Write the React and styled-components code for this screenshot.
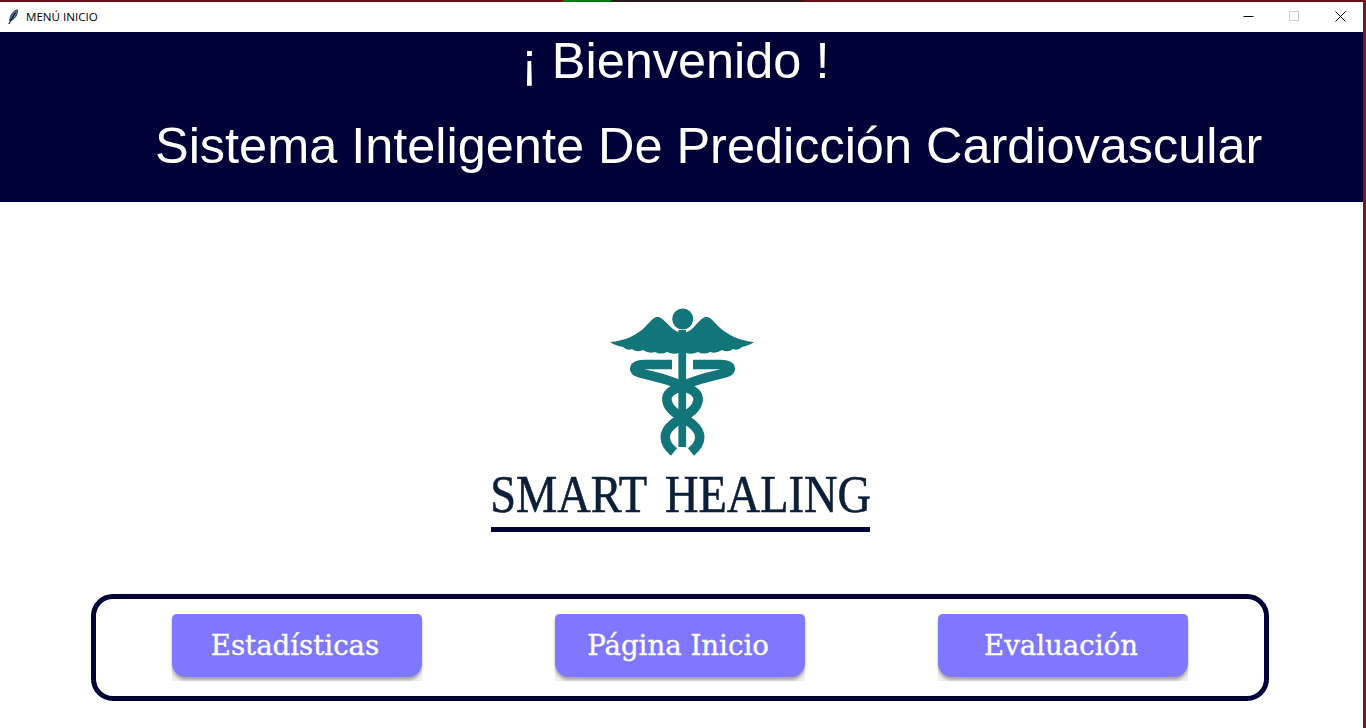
import styled, { createGlobalStyle } from 'styled-components';

const GlobalStyle = createGlobalStyle`
  html, body {
    margin: 0;
    padding: 0;
    background: #ffffff;
    overflow: hidden;
  }
`;

const App = () => {
  return (
    <>
      <GlobalStyle />
      <Frame>
        <TopStrip>
          <StripPart $w="563px" $c="#6a0f16" />
          <StripPart $w="48px" $c="#0c7a12" />
          <StripPart $w="193px" $c="#2a1a1c" />
          <StripPart $w="562px" $c="#6a0f16" />
        </TopStrip>
        <Window>
          <TitleBar>
            <TitleLeft>
              <svg width="12" height="16" viewBox="0 0 12 16">
                <path d="M10.5 0.8C7 1.5 3.8 5 3 9.5L2.6 11.5 4.4 11.2C8 10 10.8 5.5 10.5 0.8Z" fill="#4a7fb5" stroke="#10202f" strokeWidth="0.8" />
                <path d="M8.5 3.5L1.8 15" stroke="#000" strokeWidth="1.1" fill="none" />
              </svg>
              <TitleText>MENÚ INICIO</TitleText>
            </TitleLeft>
            <WinControls>
              <WinButton>
                <svg width="11" height="11" viewBox="0 0 11 11"><path d="M0.5 5.5H10.5" stroke="#000" strokeWidth="1" /></svg>
              </WinButton>
              <WinButton>
                <svg width="11" height="11" viewBox="0 0 11 11"><rect x="0.5" y="0.5" width="9" height="9" fill="none" stroke="#cccccc" strokeWidth="1" /></svg>
              </WinButton>
              <WinButton>
                <svg width="11" height="11" viewBox="0 0 11 11"><path d="M0.5 0.5L10.5 10.5M10.5 0.5L0.5 10.5" stroke="#000" strokeWidth="1" /></svg>
              </WinButton>
            </WinControls>
          </TitleBar>
          <Header>
            <Welcome>¡ Bienvenido !</Welcome>
            <Subtitle>Sistema Inteligente De Predicción Cardiovascular</Subtitle>
          </Header>
          <Main>
            <Logo>
              <svg width="180" height="165" viewBox="0 0 180 165">
                <g fill="#12757a">
                  <circle cx="91.7" cy="19" r="10.5" />
                  <path d="M19 42C34 41 46 35 54 27C59 22 63 16 67 17C71 17 76 24 82 29C85 31 88 33 91.5 33C95 33 98 31 101 29C106 24 111 17 115 17C119 16 123 22 128 27C137 35 149 41 163 42C159 45 155 46 151 47Q147 51 142 49Q137 53 131 50Q125 54 119 52Q113 55 107 52Q101 55 95 53V56H88V53Q82 55 76 52Q70 55 64 52Q58 54 52 50Q46 53 41 49Q36 51 32 47C28 46 23 45 19 42Z" />
                  <rect x="87.4" y="30" width="7.7" height="117" />
                </g>
                <g fill="none" stroke="#12757a" strokeWidth="9.5">
                  <path d="M81 64.5H53C42 64.5 41 71 49 73C60 76 72 78 84 83C98 89 109 91 107 101C105 112 92 116 82 124C72 132 71 142 83 152" />
                  <path d="M102 64.5H130C141 64.5 142 71 134 73C123 76 111 78 99 83C85 89 74 91 76 101C78 112 91 116 101 124C111 132 112 142 100 152" />
                </g>
              </svg>
              <Brand>SMART HEALING</Brand>
              <BrandRule />
            </Logo>
          </Main>
          <Panel>
            <MenuButton label="Estadísticas" />
            <MenuButton label="Página Inicio" />
            <MenuButton label="Evaluación" />
          </Panel>
        </Window>
      </Frame>
    </>
  );
};

const MenuButton = ({ label }) => (
  <ButtonBack>
    <ButtonFace>{label}</ButtonFace>
  </ButtonBack>
);

export default App;

const Frame = styled.div`
  width: 1366px;
  height: 728px;
  display: flex;
  flex-direction: column;
  overflow: hidden;
  background: #ffffff;
`;
const TopStrip = styled.div`
  display: flex;
  height: 2px;
  flex: none;
`;
const StripPart = styled.div`
  width: ${(p) => p.$w};
  background: ${(p) => p.$c};
`;
const Window = styled.div`
  flex: 1;
  display: flex;
  flex-direction: column;
  border-right: 3px solid #7a1620;
  min-height: 0;
`;
const TitleBar = styled.div`
  height: 30px;
  flex: none;
  display: flex;
  align-items: center;
  justify-content: space-between;
  background: #ffffff;
`;
const TitleLeft = styled.div`
  display: flex;
  align-items: center;
  gap: 7px;
  padding-left: 7px;
  margin-top: -1px;
`;
const TitleText = styled.span`
  font-family: "Open Sans", "Noto Sans", sans-serif;
  font-size: 11.6px;
  color: #000000;
`;
const WinControls = styled.div`
  display: flex;
  margin-top: -1px;
`;
const WinButton = styled.div`
  width: 46px;
  height: 30px;
  display: flex;
  align-items: center;
  justify-content: center;
`;
const Header = styled.header`
  height: 170px;
  flex: none;
  background: #000137;
  color: #ffffff;
  font-family: "Liberation Sans", Arial, sans-serif;
  font-size: 50.45px;
  display: flex;
  flex-direction: column;
`;
const Welcome = styled.div`
  padding-left: 521px;
  line-height: 58px;
`;
const Subtitle = styled.div`
  padding: 27px 0 0 155px;
  line-height: 58px;
`;
const Main = styled.main`
  flex: none;
  height: 392px;
  display: flex;
  justify-content: center;
  padding-top: 98px;
  box-sizing: border-box;
`;
const Logo = styled.div`
  width: 380px;
  margin-left: -2px;
  display: flex;
  flex-direction: column;
  align-items: center;
`;
const Brand = styled.div`
  font-family: "Liberation Serif", "Times New Roman", serif;
  font-size: 53px;
  line-height: 52px;
  margin-top: 3px;
  color: #0c1f38;
  white-space: nowrap;
  word-spacing: 8px;
  transform: scaleX(0.875);
  -webkit-text-stroke: 0.6px #0c1f38;
`;
const BrandRule = styled.div`
  width: 379px;
  height: 5px;
  margin-top: 7px;
  background: #000137;
`;
const Panel = styled.section`
  width: 1178px;
  height: 107px;
  box-sizing: border-box;
  margin-left: 91px;
  border: 5px solid #000137;
  border-radius: 22px;
  padding: 15px 76px 0;
  display: flex;
  justify-content: space-between;
  align-items: flex-start;
`;
const ButtonBack = styled.div`
  width: 250px;
  height: 67px;
  background: #eeeeee;
`;
const ButtonFace = styled.button`
  width: 250px;
  height: 63px;
  border: 0;
  padding: 0 4px 0 0;
  border-radius: 5px 5px 14px 14px;
  background: #8077ff;
  box-shadow: 0 3px 3px rgba(0, 0, 0, 0.3);
  color: #ffffff;
  font-family: "DejaVu Serif", "Liberation Serif", serif;
  font-size: 27.6px;
  -webkit-text-stroke: 0.35px #ffffff;
`;
